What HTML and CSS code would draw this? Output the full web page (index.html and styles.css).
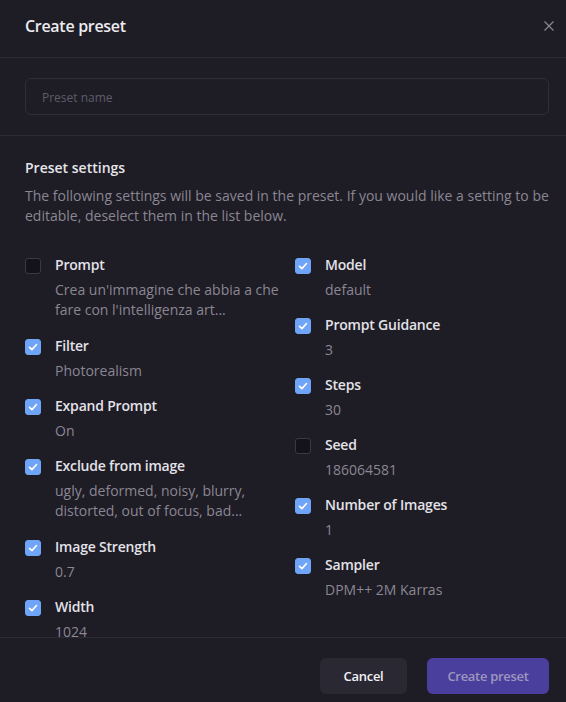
FILE: index.html
```html
<!DOCTYPE html>
<html lang="en">
<head>
<meta charset="utf-8">
<title>Create preset</title>
<link rel="stylesheet" href="styles.css">
</head>
<body>
<div class="modal">
  <header class="modal-header">
    <h1 class="modal-title">Create preset</h1>
    <button class="close-btn" aria-label="Close">
      <svg width="10" height="10" viewBox="0 0 10 10"><path d="M0.5 0.5 L9.5 9.5 M9.5 0.5 L0.5 9.5" stroke="currentColor" stroke-width="1.2" fill="none"/></svg>
    </button>
  </header>
  <section class="name-section">
    <input class="name-input" type="text" placeholder="Preset name">
  </section>
  <section class="settings">
    <h2 class="settings-title">Preset settings</h2>
    <p class="settings-desc">The following settings will be saved in the preset. If you would like a setting to be editable, deselect them in the list below.</p>
    <div class="settings-grid">
      <div class="col">
        <div class="item">
          <span class="box"></span>
          <div class="item-text"><div class="item-label">Prompt</div><div class="item-value multi">Crea un'immagine che abbia a che fare con l'intelligenza art...</div></div>
        </div>
        <div class="item">
          <span class="box checked"><svg viewBox="0 0 16 16"><path d="M4 8.4 L6.8 11 L12 5.2" /></svg></span>
          <div class="item-text"><div class="item-label">Filter</div><div class="item-value">Photorealism</div></div>
        </div>
        <div class="item">
          <span class="box checked"><svg viewBox="0 0 16 16"><path d="M4 8.4 L6.8 11 L12 5.2" /></svg></span>
          <div class="item-text"><div class="item-label">Expand Prompt</div><div class="item-value">On</div></div>
        </div>
        <div class="item">
          <span class="box checked"><svg viewBox="0 0 16 16"><path d="M4 8.4 L6.8 11 L12 5.2" /></svg></span>
          <div class="item-text"><div class="item-label">Exclude from image</div><div class="item-value multi">ugly, deformed, noisy, blurry, distorted, out of focus, bad...</div></div>
        </div>
        <div class="item">
          <span class="box checked"><svg viewBox="0 0 16 16"><path d="M4 8.4 L6.8 11 L12 5.2" /></svg></span>
          <div class="item-text"><div class="item-label">Image Strength</div><div class="item-value">0.7</div></div>
        </div>
        <div class="item">
          <span class="box checked"><svg viewBox="0 0 16 16"><path d="M4 8.4 L6.8 11 L12 5.2" /></svg></span>
          <div class="item-text"><div class="item-label">Width</div><div class="item-value">1024</div></div>
        </div>
      </div>
      <div class="col">
        <div class="item">
          <span class="box checked"><svg viewBox="0 0 16 16"><path d="M4 8.4 L6.8 11 L12 5.2" /></svg></span>
          <div class="item-text"><div class="item-label">Model</div><div class="item-value">default</div></div>
        </div>
        <div class="item">
          <span class="box checked"><svg viewBox="0 0 16 16"><path d="M4 8.4 L6.8 11 L12 5.2" /></svg></span>
          <div class="item-text"><div class="item-label">Prompt Guidance</div><div class="item-value">3</div></div>
        </div>
        <div class="item">
          <span class="box checked"><svg viewBox="0 0 16 16"><path d="M4 8.4 L6.8 11 L12 5.2" /></svg></span>
          <div class="item-text"><div class="item-label">Steps</div><div class="item-value">30</div></div>
        </div>
        <div class="item">
          <span class="box"></span>
          <div class="item-text"><div class="item-label">Seed</div><div class="item-value">186064581</div></div>
        </div>
        <div class="item">
          <span class="box checked"><svg viewBox="0 0 16 16"><path d="M4 8.4 L6.8 11 L12 5.2" /></svg></span>
          <div class="item-text"><div class="item-label">Number of Images</div><div class="item-value">1</div></div>
        </div>
        <div class="item">
          <span class="box checked"><svg viewBox="0 0 16 16"><path d="M4 8.4 L6.8 11 L12 5.2" /></svg></span>
          <div class="item-text"><div class="item-label">Sampler</div><div class="item-value">DPM++ 2M Karras</div></div>
        </div>
      </div>
    </div>
  </section>
  <footer class="modal-footer">
    <button class="btn btn-cancel">Cancel</button>
    <button class="btn btn-primary" disabled>Create preset</button>
  </footer>
</div>
</body>
</html>
```

FILE: styles.css
```css
* { box-sizing: border-box; }
html, body {
  margin: 0;
  padding: 0;
  background: #1e1c25;
  height: 100%;
}
body {
  font-family: "Open Sans", "Noto Sans", "Liberation Sans", sans-serif;
  font-size: 14px;
  color: #e6e5ea;
}
.modal {
  width: 566px;
  height: 702px;
  display: flex;
  flex-direction: column;
  background: #1e1c25;
  overflow: hidden;
}
.modal-header {
  height: 58px;
  flex: none;
  display: flex;
  align-items: center;
  justify-content: space-between;
  padding: 0 12px 5px 25px;
  border-bottom: 1px solid #2c2a35;
}
.modal-title {
  margin: 0;
  font-size: 16px;
  font-weight: 600;
  color: #ecebf0;
  letter-spacing: -0.3px;
}
.close-btn {
  background: none;
  border: 0;
  padding: 0;
  width: 10px;
  height: 10px;
  color: #8a8794;
  display: flex;
}
.name-section {
  flex: none;
  padding: 20px 17px 20px 25px;
  border-bottom: 1px solid #2c2a35;
}
.name-input {
  display: block;
  width: 100%;
  height: 37px;
  background: #1e1c25;
  border: 1px solid #302e39;
  border-radius: 6px;
  padding: 1px 16px 0;
  font-family: inherit;
  font-size: 12px;
  color: #e6e5ea;
  outline: none;
}
.name-input::placeholder { color: #5f5c69; }
.settings {
  flex: 1;
  min-height: 0;
  overflow: hidden;
  padding: 22px 17px 0 25px;
}
.settings-title {
  margin: 0;
  font-size: 14px;
  line-height: 20px;
  font-weight: 600;
  color: #e6e5ea;
}
.settings-desc {
  margin: 8px 0 0;
  line-height: 20px;
  color: #8a8793;
}
.settings-grid {
  margin-top: 29px;
  display: grid;
  grid-template-columns: 1fr 1fr;
  column-gap: 16px;
}
.col {
  display: flex;
  flex-direction: column;
  gap: 15px;
}
.item {
  display: flex;
  gap: 14px;
}
.box {
  flex: none;
  width: 16px;
  height: 16px;
  margin-top: 3px;
  border-radius: 3px;
  border: 1px solid #3a3843;
  background: #14121a;
  display: flex;
}
.box.checked {
  background: #6fa5f8;
  border-color: #6fa5f8;
}
.box svg {
  width: 14px;
  height: 14px;
}
.box svg path {
  fill: none;
  stroke: #ffffff;
  stroke-width: 1.8;
  stroke-linecap: round;
  stroke-linejoin: round;
}
.item-text { min-width: 0; }
.item-label {
  font-weight: 600;
  line-height: 20px;
  color: #e3e2e8;
  letter-spacing: -0.2px;
}
.item-value {
  margin-top: 5px;
  line-height: 20px;
  color: #8a8793;
}
.item-value.multi {
  margin-bottom: 1px;
}
.modal-footer {
  flex: none;
  border-top: 1px solid #2c2a35;
  padding: 20px 17px 8px 25px;
  display: flex;
  justify-content: flex-end;
  gap: 20px;
}
.btn {
  height: 36px;
  border: 0;
  border-radius: 6px;
  font-family: inherit;
  font-size: 13px;
  font-weight: 600;
  letter-spacing: -0.3px;
}
.btn-cancel {
  width: 87px;
  background: #2a2832;
  color: #f2f1f5;
}
.btn-primary {
  width: 122px;
  background: #4b3f9d;
  color: #9d97bd;
}
```
